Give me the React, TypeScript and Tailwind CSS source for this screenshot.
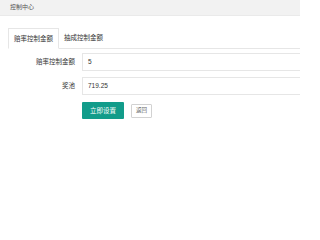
export default function App() {
  const font = { fontFamily: '"Liberation Sans", "Noto Sans CJK SC", sans-serif' };
  return (
    <div className="w-[300px] h-[205px] overflow-hidden bg-white text-[#333]" style={font}>
      <div className="h-[16px] bg-[#f2f2f2] border-b border-[#eaeaea] flex items-center pl-[10px] text-[6px] text-[#555]">
        控制中心
      </div>
      <div className="pl-[8px] pt-[12px]">
        <div className="flex h-[21px] border-b border-[#e6e6e6] text-[6.5px]">
          <div className="h-[21px] px-[5px] flex items-center border border-[#e6e6e6] border-b-white bg-white">
            赔率控制金额
          </div>
          <div className="h-[20px] px-[5px] flex items-center">抽成控制金额</div>
        </div>
        <div className="mt-[4px] flex flex-col gap-[6px] text-[6.5px]">
          <div className="flex items-center">
            <div className="w-[74px] pr-[7px] text-right">赔率控制金额</div>
            <div className="flex-1 -mr-[20px] h-[18px] border border-[#e6e6e6] flex items-center pl-[5px]">5</div>
          </div>
          <div className="flex items-center">
            <div className="w-[74px] pr-[7px] text-right">奖池</div>
            <div className="flex-1 -mr-[20px] h-[18px] border border-[#e6e6e6] flex items-center pl-[5px]">719.25</div>
          </div>
          <div className="flex items-center pl-[74px] gap-[7px] mt-[1px]">
            <div className="w-[42px] h-[17px] bg-[#129c8a] rounded-[1px] text-white flex items-center justify-center text-[6.5px]">
              立即设置
            </div>
            <div className="w-[21px] h-[14px] border border-[#d2d2d2] rounded-[1px] text-[#666] flex items-center justify-center text-[5.5px]">
              返回
            </div>
          </div>
        </div>
      </div>
    </div>
  );
}
